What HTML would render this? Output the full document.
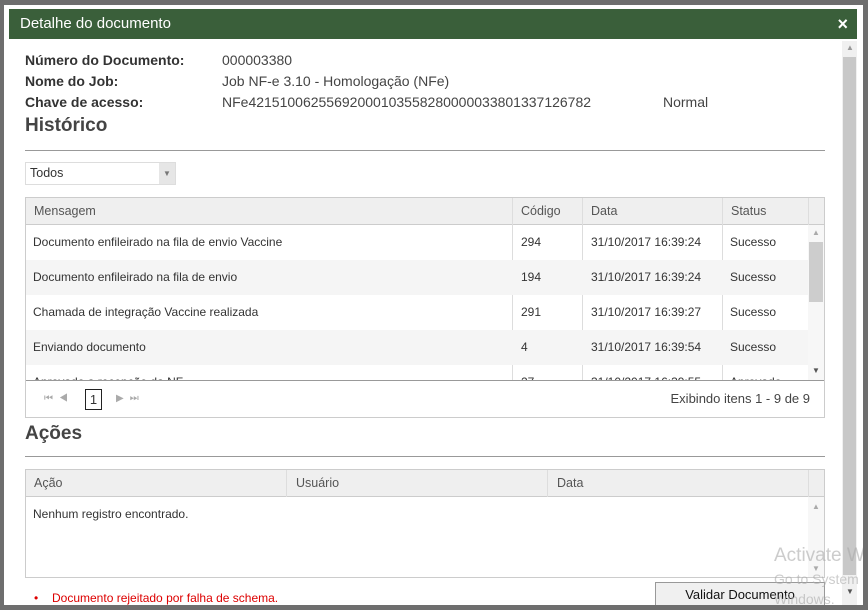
<!DOCTYPE html>
<html><head><meta charset="utf-8"><style>
*{box-sizing:border-box;margin:0;padding:0}
body{width:868px;height:610px;background:#6e6e6e;font-family:"Liberation Sans",sans-serif;position:relative;overflow:hidden}
.dlg{position:absolute;left:4px;top:5px;width:859px;height:600px;background:#fff;overflow:hidden}
.title{position:absolute;left:5px;top:4px;width:848px;height:30px;background:#3a5f3a;color:#fff;font-size:15px;line-height:30px;padding-left:11px}
.title .x{position:absolute;right:9px;top:0;font-weight:bold;font-size:18px}
.abs{position:absolute;white-space:nowrap}
.lbl{font-weight:bold;color:#333;font-size:14px}
.val{color:#444;font-size:14px}
h2{position:absolute;font-size:19px;font-weight:bold;color:#444}
.hr{position:absolute;left:21px;width:800px;height:1px;background:#999}
.grid{position:absolute;left:21px;width:800px;border:1px solid #ccc;font-size:12px;color:#333}
.gh{background:#efefef;height:27px;border-bottom:1px solid #ccc;position:relative}
.gh span{position:absolute;top:0;line-height:27px;color:#555;font-size:12.5px}
.row{height:35px;position:relative}
.row span{position:absolute;line-height:35px}
.vl{position:absolute;top:0;width:1px;background:#ddd}
.sb{position:absolute;background:#f0f0f0}
</style></head><body>
<div class="dlg">
<div class="title">Detalhe do documento<span class="x">×</span></div>
<div class="sb" style="left:838px;top:36px;width:15px;height:564px"></div>
<div class="abs" style="left:842px;top:38px;font-size:8px;color:#999">▲</div>
<div class="abs" style="left:839px;top:52px;width:13px;height:518px;background:#c8c8c8"></div>
<div class="abs" style="left:842px;top:582px;font-size:8px;color:#555">▼</div>

<div class="abs lbl" style="left:21px;top:47px">Número do Documento:</div>
<div class="abs val" style="left:218px;top:47px">000003380</div>
<div class="abs lbl" style="left:21px;top:68px">Nome do Job:</div>
<div class="abs val" style="left:218px;top:68px">Job NF-e 3.10 - Homologação (NFe)</div>
<div class="abs lbl" style="left:21px;top:89px">Chave de acesso:</div>
<div class="abs val" style="left:218px;top:89px">NFe42151006255692000103558280000033801337126782</div>
<div class="abs val" style="left:659px;top:89px">Normal</div>
<h2 style="left:21px;top:110px">Histórico</h2>
<div class="hr" style="top:145px"></div>
<div class="abs" style="left:21px;top:157px;width:151px;height:23px;border:1px solid #ddd;font-size:12.5px;line-height:21px;padding-left:4px;color:#333">Todos<span style="position:absolute;right:0;top:0;width:16px;height:21px;background:#e6e6e6;font-size:8px;text-align:center;color:#777">▼</span></div>

<div class="grid" style="top:192px;height:221px;overflow:hidden">
<div class="gh"><span style="left:8px">Mensagem</span><span style="left:495px">Código</span><span style="left:565px">Data</span><span style="left:705px">Status</span></div>
<div class="vl" style="left:486px;height:183px"></div><div class="vl" style="left:556px;height:183px"></div><div class="vl" style="left:696px;height:183px"></div><div class="vl" style="left:782px;height:27px"></div>
<div style="position:absolute;top:27px;left:0;width:782px;height:155px;overflow:hidden">
<div class="row"><span style="left:7px">Documento enfileirado na fila de envio Vaccine</span><span style="left:495px">294</span><span style="left:565px">31/10/2017 16:39:24</span><span style="left:704px">Sucesso</span></div>
<div class="row" style="background:#f5f5f5"><span style="left:7px">Documento enfileirado na fila de envio</span><span style="left:495px">194</span><span style="left:565px">31/10/2017 16:39:24</span><span style="left:704px">Sucesso</span></div>
<div class="row"><span style="left:7px">Chamada de integração Vaccine realizada</span><span style="left:495px">291</span><span style="left:565px">31/10/2017 16:39:27</span><span style="left:704px">Sucesso</span></div>
<div class="row" style="background:#f5f5f5"><span style="left:7px">Enviando documento</span><span style="left:495px">4</span><span style="left:565px">31/10/2017 16:39:54</span><span style="left:704px">Sucesso</span></div>
<div class="row"><span style="left:7px">Aprovado a recepção da NF</span><span style="left:495px">27</span><span style="left:565px">31/10/2017 16:39:55</span><span style="left:704px">Aprovado</span></div>
</div>
<div class="sb" style="left:782px;top:27px;width:16px;height:155px;background:#f7f7f7"></div>
<div class="abs" style="left:786px;top:30px;font-size:8px;color:#aaa">▲</div>
<div class="abs" style="left:783px;top:44px;width:14px;height:60px;background:#cdcdcd"></div>
<div class="abs" style="left:786px;top:168px;font-size:8px;color:#555">▼</div>
<div style="position:absolute;top:182px;left:0;width:800px;height:1px;background:#999"></div>
<div class="abs" style="left:18px;top:195px;font-size:10px;color:#aaa;letter-spacing:6px">⏮◀</div>
<div class="abs" style="left:59px;top:191px;width:17px;height:21px;border:1px solid #222;font-size:13px;line-height:19px;text-align:center">1</div>
<div class="abs" style="left:90px;top:195px;font-size:10px;color:#aaa;letter-spacing:6px">▶⏭</div>
<div class="abs" style="right:14px;top:193px;font-size:13px;color:#444">Exibindo itens 1 - 9 de 9</div>
</div>

<h2 style="left:21px;top:418px">Ações</h2>
<div class="hr" style="top:451px"></div>
<div class="grid" style="top:464px;height:109px">
<div class="gh"><span style="left:8px">Ação</span><span style="left:270px">Usuário</span><span style="left:531px">Data</span></div>
<div class="vl" style="left:260px;height:27px"></div><div class="vl" style="left:521px;height:27px"></div><div class="vl" style="left:782px;height:27px"></div>
<div class="abs" style="left:7px;top:37px">Nenhum registro encontrado.</div>
<div class="sb" style="left:782px;top:27px;width:16px;height:80px;background:#f7f7f7"></div>
<div class="abs" style="left:786px;top:32px;font-size:8px;color:#aaa">▲</div>
<div class="abs" style="left:786px;top:94px;font-size:8px;color:#aaa">▼</div>
</div>
<div class="abs" style="left:30px;top:586px;font-size:12px;color:#d00">•</div>
<div class="abs" style="left:48px;top:586px;font-size:12px;color:#d00">Documento rejeitado por falha de schema.</div>
<div class="abs" style="left:651px;top:577px;width:170px;height:30px;border:1px solid #999;background:#f0f0f0;font-size:13px;text-align:center;line-height:24px;color:#111">Validar Documento</div>
<div class="abs" style="left:770px;top:540px;font-size:19px;color:rgba(170,170,170,.6)">Activate W</div>
<div class="abs" style="left:770px;top:566px;font-size:14px;color:rgba(170,170,170,.6)">Go to System</div>
<div class="abs" style="left:770px;top:586px;font-size:14px;color:rgba(170,170,170,.6)">Windows.</div>
</div>
</body></html>
